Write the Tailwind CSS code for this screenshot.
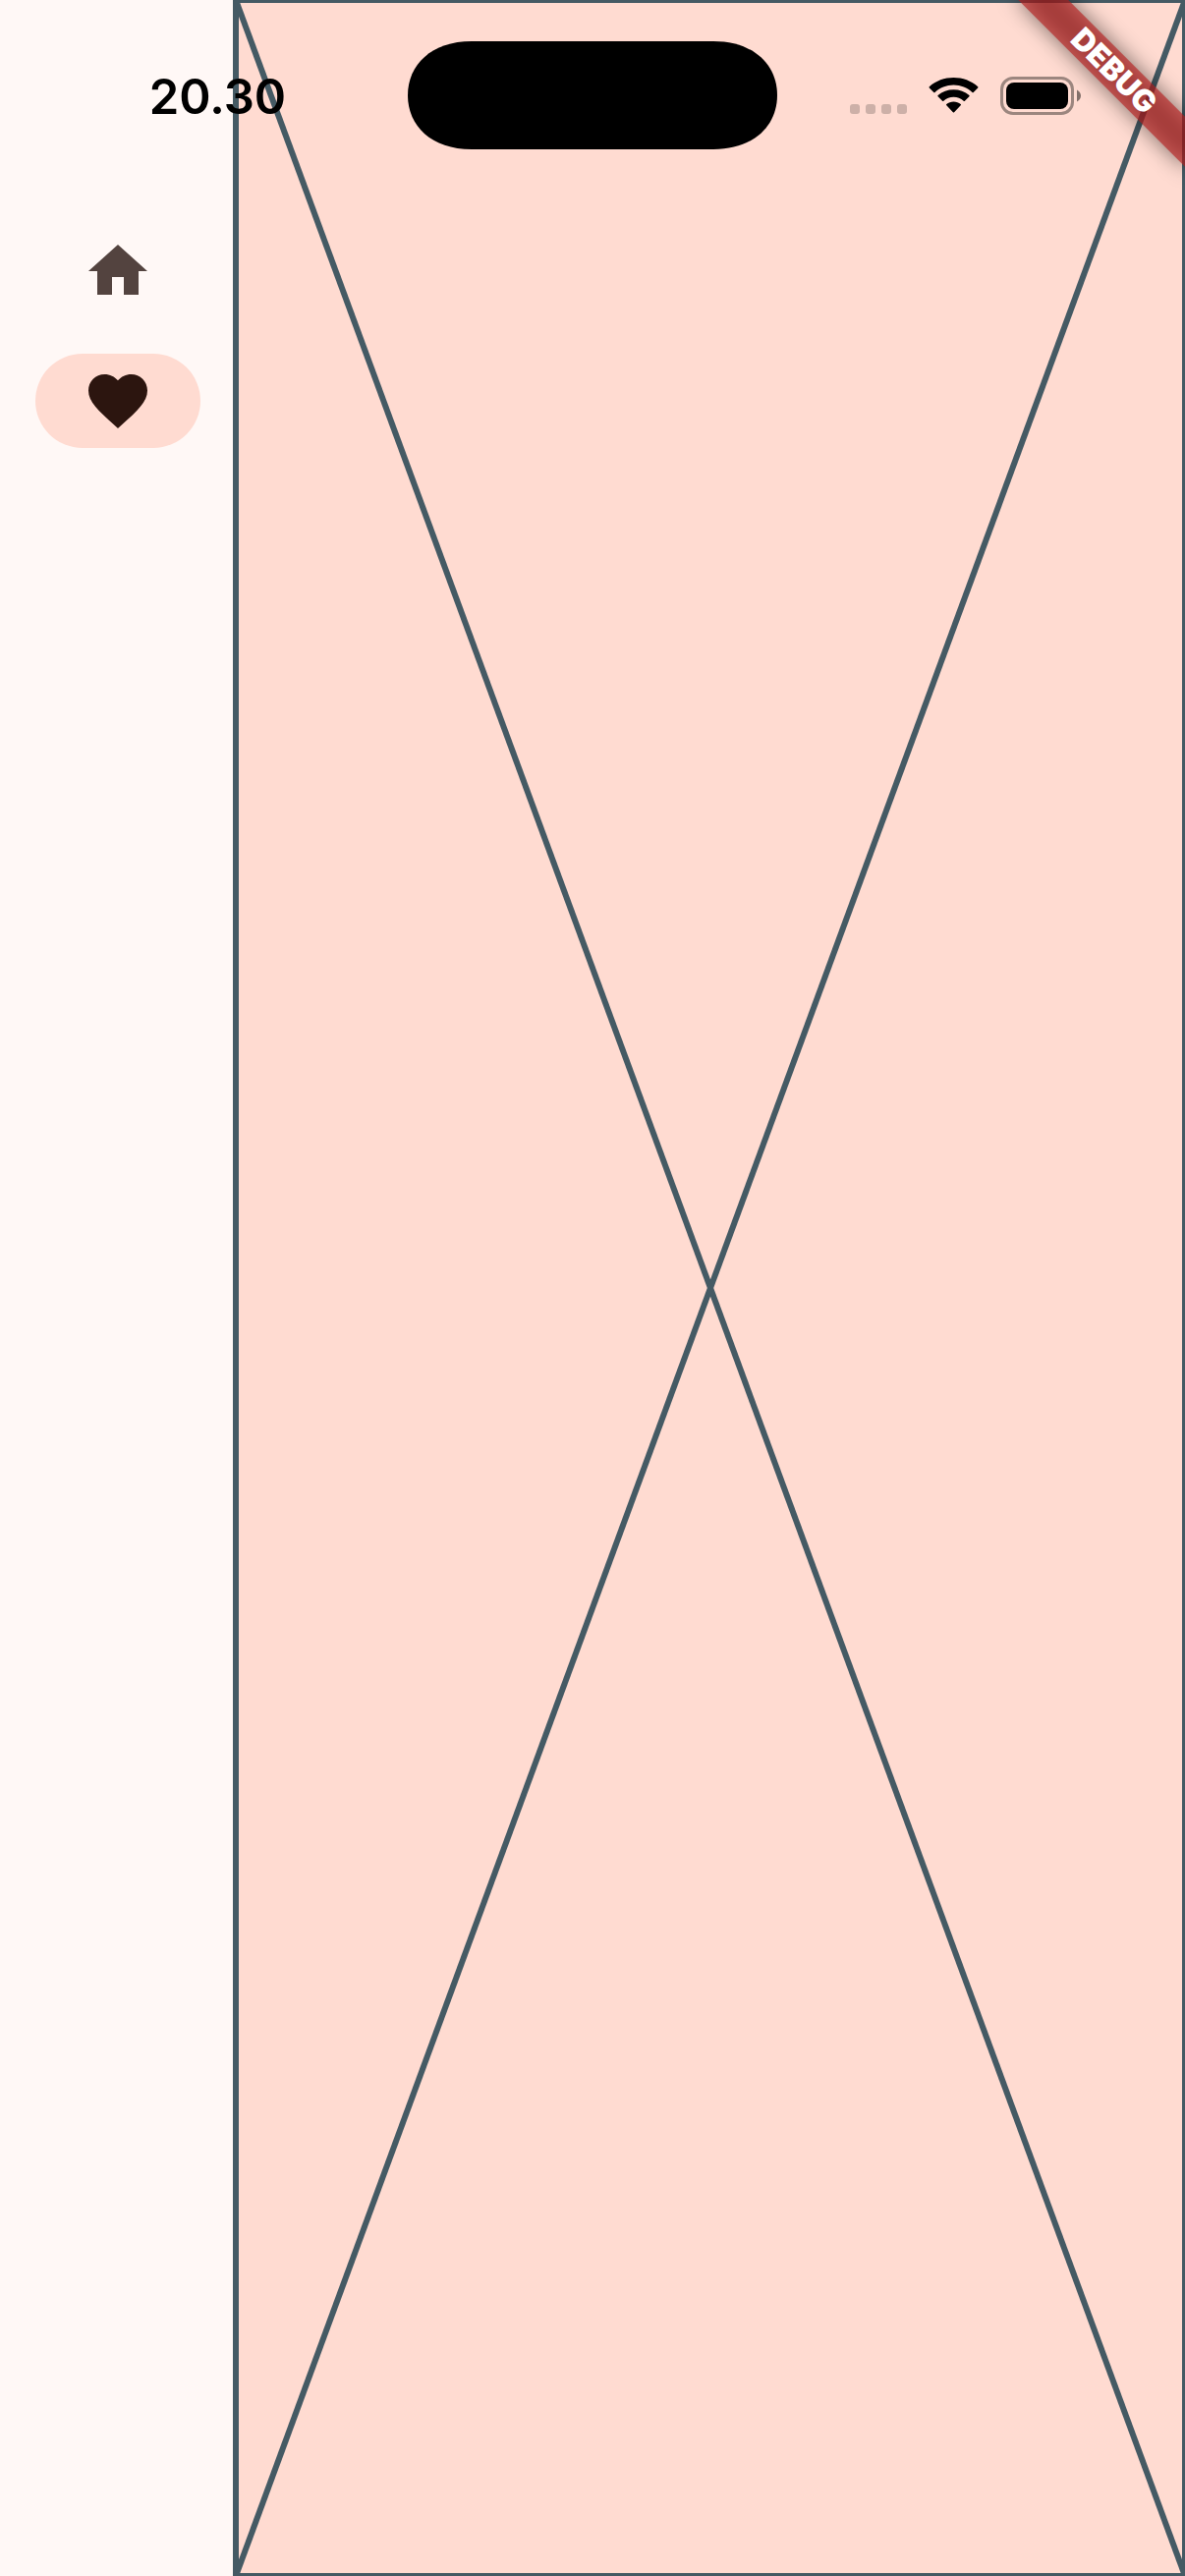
<!DOCTYPE html>
<html lang="en">
<head>
<meta charset="utf-8">
<meta name="viewport" content="width=device-width, initial-scale=1">
<title>Favorites</title>
<script src="https://cdn.jsdelivr.net/npm/@tailwindcss/browser@4"></script>
</head>
<body class="relative flex min-h-screen overflow-hidden bg-[#fff8f6] font-['Inter',sans-serif]">

  <!-- Navigation rail -->
  <nav aria-label="Main" class="flex w-60 shrink-0 flex-col items-center gap-9 pt-57">
    <button type="button" aria-label="Home" class="flex h-24 w-42 items-center justify-center rounded-full text-[#53433f]">
      <svg class="size-18" viewBox="0 0 24 24" fill="currentColor" aria-hidden="true"><path d="M10 20v-6h4v6h5v-8h3L12 3 2 12h3v8z"/></svg>
    </button>
    <button type="button" aria-label="Favorites" aria-current="page" class="flex h-24 w-42 items-center justify-center rounded-full bg-[#ffdbd1] text-[#2c150f]">
      <svg class="size-18" viewBox="0 0 24 24" fill="currentColor" aria-hidden="true"><path d="M12 21.35l-1.45-1.32C5.4 15.36 2 12.28 2 8.5 2 5.42 4.42 3 7.5 3c1.74 0 3.41.81 4.5 2.09C13.09 3.81 14.76 3 16.5 3 19.58 3 22 5.42 22 8.5c0 3.78-3.4 6.86-8.55 11.54L12 21.35z"/></svg>
    </button>
  </nav>

  <!-- Placeholder content area -->
  <main class="relative flex-1 bg-[#ffdbd1]">
    <svg class="absolute inset-0 size-full overflow-visible text-[#455a64]" fill="none" stroke="currentColor" stroke-width="6" aria-hidden="true">
      <rect x="0" y="0" width="100%" height="100%"/>
      <line x1="0" y1="0" x2="100%" y2="100%"/>
      <line x1="100%" y1="0" x2="0" y2="100%"/>
    </svg>
  </main>

  <!-- Debug ribbon -->
  <div class="absolute top-0 right-0 size-60 overflow-hidden">
    <div class="absolute top-0 right-0 size-0 rotate-45">
      <div class="absolute top-21 -left-30 h-9 w-60 bg-black/50 blur-[11px]"></div>
      <div class="absolute top-21 -left-30 flex h-9 w-60 items-center justify-center bg-[#b71c1c]/63 text-[31px] leading-9 font-black text-white">DEBUG</div>
    </div>
  </div>

  <!-- Status bar -->
  <header class="absolute inset-x-0 top-0 grid grid-cols-[1fr_376px_1fr] items-center pt-[42px]">
    <div class="flex justify-center pt-1 pl-7">
      <time datetime="20:30" class="text-[49px] leading-[56px] font-semibold text-black">20.30</time>
    </div>
    <svg class="h-[110px] w-full" viewBox="0 0 376 110" aria-hidden="true">
      <path d="M65 0H311C352 0 376 24 376 55S352 110 311 110H65C24 110 0 86 0 55S24 0 65 0Z"/>
    </svg>
    <div class="flex items-center justify-center gap-[22px] pr-8">
      <svg class="h-10 w-[58px]" viewBox="0 0 58 40" fill="#cdb0a8" aria-hidden="true">
        <rect x="0" y="29" width="10" height="10" rx="3"/><rect x="16" y="29" width="10" height="10" rx="3"/><rect x="32" y="29" width="10" height="10" rx="3"/><rect x="48" y="29" width="10" height="10" rx="3"/>
      </svg>
      <svg class="h-10 w-[51px]" viewBox="0 0 51 40" aria-hidden="true">
        <path d="M25.500 9.500C32.800 9.500 39.500 12.300 44.500 17Q45.100 17.500 45.700 17L50.200 12.500Q50.800 11.800 50.200 11.200C43.500 5.200 34.800 2 25.500 2S7.500 5.200.8 11.200Q.2 11.800.8 12.500L5.300 17Q5.900 17.500 6.500 17C11.500 12.300 18.200 9.500 25.500 9.500Z"/>
        <path d="M25.500 21.800C29.300 21.800 32.900 23.300 35.700 25.800Q36.300 26.400 36.900 25.800L41.400 21.300Q42 20.700 41.400 20.100C37.100 16.200 31.500 14.300 25.500 14.300S13.900 16.200 9.600 20.100Q9 20.700 9.600 21.300L14.100 25.800Q14.700 26.400 15.300 25.800C18.100 23.300 21.700 21.800 25.500 21.800Z"/>
        <path d="M32.700 30.200Q33.400 29.500 32.700 28.900C30.800 27.400 28.200 26.500 25.500 26.500S20.200 27.400 18.300 28.900Q17.600 29.500 18.300 30.200L24.900 37.200Q25.500 37.800 26.100 37.200Z"/>
      </svg>
      <svg class="h-10 w-[82px]" viewBox="0 0 82 40" aria-hidden="true">
        <rect x="1.500" y="2.500" width="72" height="36" rx="11.500" fill="none" stroke="#9c867f" stroke-width="3"/>
        <rect x="6" y="7" width="63" height="27" rx="8"/>
        <path d="M78 14.500C80.500 15.800 82 18 82 20.500S80.500 25.200 78 26.500Z" fill="#83706a"/>
      </svg>
    </div>
  </header>
</body>
</html>
